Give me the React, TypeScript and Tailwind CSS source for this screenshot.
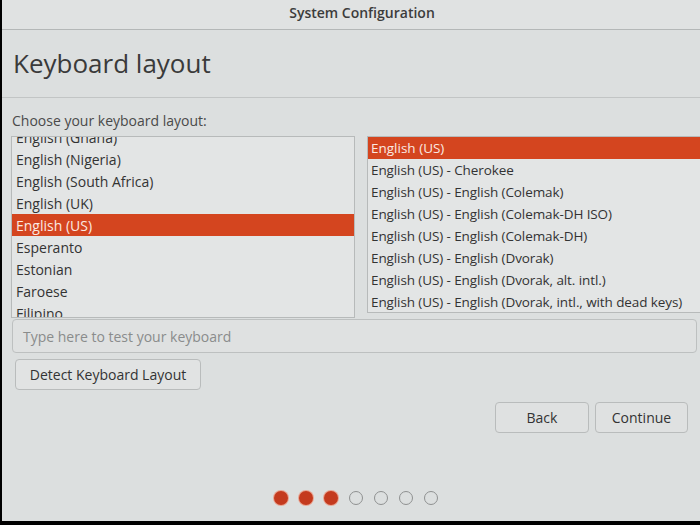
import React from "react";

const leftItems = [
  "English (Ghana)",
  "English (Nigeria)",
  "English (South Africa)",
  "English (UK)",
  "English (US)",
  "Esperanto",
  "Estonian",
  "Faroese",
  "Filipino",
];

const rightItems = [
  "English (US)",
  "English (US) - Cherokee",
  "English (US) - English (Colemak)",
  "English (US) - English (Colemak-DH ISO)",
  "English (US) - English (Colemak-DH)",
  "English (US) - English (Dvorak)",
  "English (US) - English (Dvorak, alt. intl.)",
  "English (US) - English (Dvorak, intl., with dead keys)",
];

export default function App() {
  return (
    <div
      className="w-[700px] h-[525px] bg-black overflow-hidden flex"
      style={{ fontFamily: '"Open Sans", "Noto Sans", sans-serif' }}
    >
      <div className="ml-[2px] mb-[4px] flex-1 flex flex-col bg-[#dcdfdf] text-[#3a3a3a]">
        {/* header */}
        <div className="h-[30px] shrink-0 flex items-center justify-center pl-[22px] pb-[5px] bg-[#e0e2e2] border-b border-[#b4b7b7] text-[14px] font-semibold text-[#3c3c3c]">
          System Configuration
        </div>

        {/* title */}
        <div className="h-[68px] shrink-0 flex items-center pl-[11px] border-b border-[#c2c5c5] text-[26px] leading-none text-[#3a3a3a] pb-[2px]">
          Keyboard layout
        </div>

        <div className="pl-[10px] pt-[13px] text-[14px] leading-[20px] text-[#4a4a4a]">
          Choose your keyboard layout:
        </div>

        {/* lists */}
        <div className="flex gap-[12px] pl-[9px] mt-[5px]">
          <div className="w-[344px] h-[182px] border border-[#b7baba] bg-[#e3e5e5] overflow-hidden">
            <div className="-mt-[11px]">
              {leftItems.map((t) => (
                <div
                  key={t}
                  className={
                    t === "English (US)"
                      ? "h-[22px] flex items-center pl-[4px] text-[14px] bg-[#d4451f] text-[#fbe9e2]"
                      : "h-[22px] flex items-center pl-[4px] text-[14px] text-[#333333]"
                  }
                >
                  {t}
                </div>
              ))}
            </div>
          </div>
          <div className="flex-1 h-[177px] border border-r-0 border-[#b7baba] bg-[#e3e5e5] overflow-hidden">
            {rightItems.map((t, i) => (
              <div
                key={t}
                className={
                  i === 0
                    ? "h-[22px] flex items-center pl-[3px] text-[13.5px] bg-[#d4451f] text-[#fbe9e2]"
                    : "h-[22px] flex items-center pl-[3px] text-[13.5px] tracking-[-0.1px] text-[#333333] whitespace-nowrap"
                }
              >
                {t}
              </div>
            ))}
          </div>
        </div>

        {/* test input */}
        <div className="ml-[10px] mr-[3px] mt-[1px] h-[34px] rounded-[4px] border border-[#bdc0c0] bg-[#dfe1e1] flex items-center pl-[10px] text-[14px] text-[#8a8c8c]">
          Type here to test your keyboard
        </div>

        {/* detect button */}
        <div className="ml-[13px] mt-[6px]">
          <div className="w-[186px] h-[31px] rounded-[4px] border border-[#b9bcbc] bg-[#e1e3e3] flex items-center justify-center text-[14px] text-[#333333]">
            Detect Keyboard Layout
          </div>
        </div>

        {/* nav buttons */}
        <div className="flex justify-end gap-[6px] pr-[12px] mt-[12px]">
          <div className="w-[94px] h-[31px] rounded-[4px] border border-[#b9bcbc] bg-[#dfe1e1] flex items-center justify-center text-[14px] text-[#333333]">
            Back
          </div>
          <div className="w-[93px] h-[31px] rounded-[4px] border border-[#b9bcbc] bg-[#dfe1e1] flex items-center justify-center text-[14px] text-[#333333]">
            Continue
          </div>
        </div>

        {/* progress dots */}
        <div className="flex gap-[11px] pl-[272px] mt-[58px]">
          {[0, 1, 2, 3, 4, 5, 6].map((i) =>
            i < 3 ? (
              <div
                key={i}
                className="w-[14px] h-[14px] rounded-full bg-[#c43a1e] ring-1 ring-[#e9a592]"
              />
            ) : (
              <div
                key={i}
                className="w-[14px] h-[14px] rounded-full border-[1.5px] border-[#8f9191]"
              />
            )
          )}
        </div>
      </div>
    </div>
  );
}
